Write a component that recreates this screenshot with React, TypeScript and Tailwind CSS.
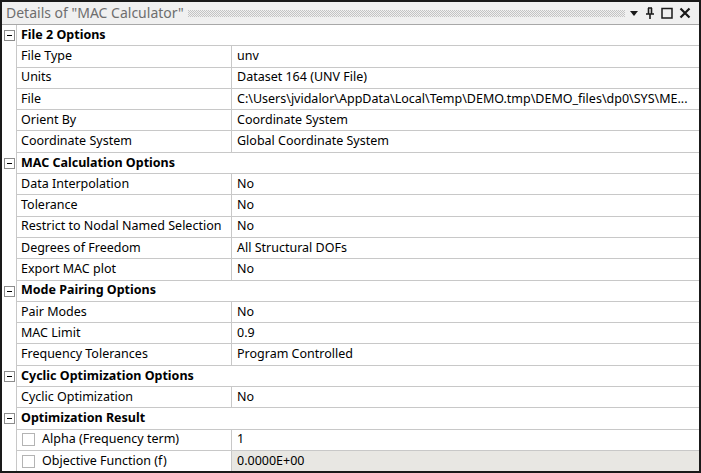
import React from 'react';

type Row = { label: string; value: string; check?: boolean; shaded?: boolean };
type Section = { title: string; rows: Row[] };

const sections: Section[] = [
  {
    title: 'File 2 Options',
    rows: [
      { label: 'File Type', value: 'unv' },
      { label: 'Units', value: 'Dataset 164 (UNV File)' },
      { label: 'File', value: 'C:\\Users\\jvidalor\\AppData\\Local\\Temp\\DEMO.tmp\\DEMO_files\\dp0\\SYS\\ME...' },
      { label: 'Orient By', value: 'Coordinate System' },
      { label: 'Coordinate System', value: 'Global Coordinate System' },
    ],
  },
  {
    title: 'MAC Calculation Options',
    rows: [
      { label: 'Data Interpolation', value: 'No' },
      { label: 'Tolerance', value: 'No' },
      { label: 'Restrict to Nodal Named Selection', value: 'No' },
      { label: 'Degrees of Freedom', value: 'All Structural DOFs' },
      { label: 'Export MAC plot', value: 'No' },
    ],
  },
  {
    title: 'Mode Pairing Options',
    rows: [
      { label: 'Pair Modes', value: 'No' },
      { label: 'MAC Limit', value: '0.9' },
      { label: 'Frequency Tolerances', value: 'Program Controlled' },
    ],
  },
  {
    title: 'Cyclic Optimization Options',
    rows: [{ label: 'Cyclic Optimization', value: 'No' }],
  },
  {
    title: 'Optimization Result',
    rows: [
      { label: 'Alpha (Frequency term)', value: '1', check: true },
      { label: 'Objective Function (f)', value: '0.0000E+00', check: true, shaded: true },
    ],
  },
];

const MinusBox = () => (
  <div className="w-[11px] h-[11px] border border-[#8c8c8c] bg-white flex items-center justify-center">
    <div className="w-[5px] h-[1px] bg-black" />
  </div>
);

const Dots = () => (
  <svg className="flex-1 h-[7px] mx-[4px]" preserveAspectRatio="none">
    <defs>
      <pattern id="dots" width="2" height="2" patternUnits="userSpaceOnUse">
        <rect x="0" y="0" width="1" height="1" fill="#c4c4c4" />
        <rect x="1" y="1" width="1" height="1" fill="#c4c4c4" />
      </pattern>
    </defs>
    <rect width="100%" height="100%" fill="url(#dots)" />
  </svg>
);

export default function App() {
  return (
    <div
      className="w-[701px] h-[473px] border-2 border-[#1a1a1a] bg-white flex flex-col overflow-hidden text-[12.5px] text-black"
      style={{ fontFamily: '"Noto Sans", "Open Sans", sans-serif' }}
    >
      <div className="h-[23px] bg-[#f0f0f0] border-b border-[#a8a8a8] flex items-center pl-[4px] pr-[8px] shrink-0">
        <span className="text-[14px] text-[#6e6e6e] leading-none">Details of "MAC Calculator"</span>
        <Dots />
        <div className="flex items-center gap-[6px]">
          <svg width="10" height="10" viewBox="0 0 10 10">
            <path d="M1 3 L9 3 L5 8 Z" fill="#1a1a1a" />
          </svg>
          <svg width="10" height="12" viewBox="0 0 10 12">
            <path d="M3 1 H7 M3.5 1 V7 M6.5 1 V7 M1 7 H9 M5 7 V12" stroke="#1a1a1a" strokeWidth="1.6" fill="none" />
          </svg>
          <svg width="12" height="12" viewBox="0 0 12 12">
            <rect x="1" y="1.5" width="10" height="9.5" stroke="#1a1a1a" strokeWidth="1.5" fill="none" />
          </svg>
          <svg width="12" height="12" viewBox="0 0 12 12">
            <path d="M1.5 1.5 L10.5 10.5 M10.5 1.5 L1.5 10.5" stroke="#1a1a1a" strokeWidth="2.2" />
          </svg>
        </div>
      </div>
      <div className="flex flex-col">
        {sections.map((s) => (
          <React.Fragment key={s.title}>
            <div className="h-[21.3px] flex">
              <div className="w-[14px] shrink-0 flex items-center justify-center">
                <MinusBox />
              </div>
              <div className="flex-1 border-l border-b border-[#c8c8c8] flex items-center pl-[4px] font-bold">
                {s.title}
              </div>
            </div>
            {s.rows.map((r) => (
              <div key={r.label} className="h-[21.3px] flex">
                <div className="w-[14px] shrink-0" />
                <div className="w-[216px] shrink-0 border-l border-b border-r border-[#c8c8c8] flex items-center pl-[4px] whitespace-nowrap overflow-hidden">
                  {r.check && <div className="w-[13px] h-[13px] border border-[#b4b4b4] bg-white mr-[7px] ml-[1px]" />}
                  {r.label}
                </div>
                <div
                  className={`flex-1 border-b border-[#c8c8c8] flex items-center pl-[5px] whitespace-nowrap overflow-hidden ${
                    r.shaded ? 'bg-[#e8e7e3]' : ''
                  }`}
                >
                  {r.value}
                </div>
              </div>
            ))}
          </React.Fragment>
        ))}
      </div>
    </div>
  );
}
